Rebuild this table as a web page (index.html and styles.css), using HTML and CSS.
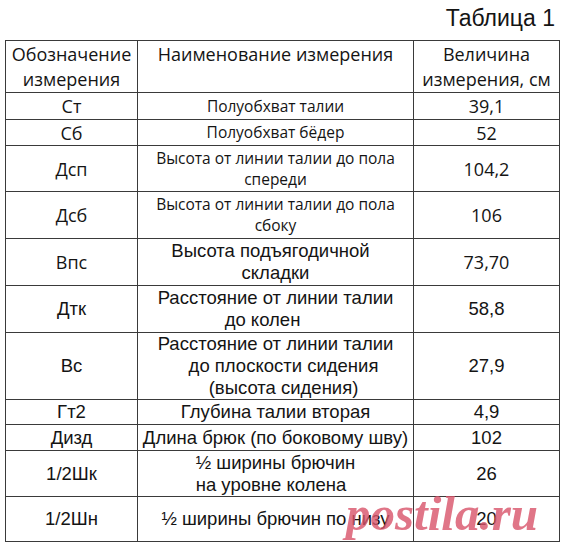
FILE: index.html
```html
<!DOCTYPE html>
<html lang="ru">
<head>
<meta charset="utf-8">
<title>Таблица 1</title>
<link rel="stylesheet" href="styles.css">
</head>
<body>
<div class="page">
  <div class="caption">Таблица 1</div>
  <table class="sizes">
    <colgroup><col class="c1"><col class="c2"><col class="c3"></colgroup>
    <thead>
      <tr class="h51 head">
        <th>Обозначение<br>измерения</th>
        <th>Наименование измерения</th>
        <th>Величина<br>измерения, см</th>
      </tr>
    </thead>
    <tbody>
      <tr class="h27 cal">
        <td>Ст</td><td class="small">Полуобхват талии</td><td>39,1</td>
      </tr>
      <tr class="h26 cal">
        <td>Сб</td><td class="small">Полуобхват бёдер</td><td>52</td>
      </tr>
      <tr class="h46 cal">
        <td>Дсп</td><td class="small">Высота от линии талии до пола<br>спереди</td><td>104,2</td>
      </tr>
      <tr class="h47 cal">
        <td>Дсб</td><td class="small">Высота от линии талии до пола<br>сбоку</td><td>106</td>
      </tr>
      <tr class="h47 cal">
        <td>Впс</td><td class="arial"><span class="ln shift-l">Высота подъягодичной</span><span class="ln">складки</span></td><td>73,70</td>
      </tr>
      <tr class="h47 arial">
        <td>Дтк</td><td><span class="ln">Расстояние от линии талии</span><span class="ln shift-l2">до колен</span></td><td>58,8</td>
      </tr>
      <tr class="h64 arial">
        <td>Вс</td><td><span class="ln">Расстояние от линии талии</span><span class="ln shift-r">до плоскости сидения</span><span class="ln shift-r">(высота сидения)</span></td><td>27,9</td>
      </tr>
      <tr class="h25 arial">
        <td>Гт2</td><td>Глубина талии вторая</td><td>4,9</td>
      </tr>
      <tr class="h26 arial">
        <td>Дизд</td><td>Длина брюк (по боковому шву)</td><td>102</td>
      </tr>
      <tr class="h46 arial">
        <td>1/2Шк</td><td><span class="block-left">½ ширины брючин<br>на уровне колена</span></td><td>26</td>
      </tr>
      <tr class="h45 arial">
        <td>1/2Шн</td><td>½ ширины брючин по низу</td><td>20</td>
      </tr>
    </tbody>
  </table>
  <div class="watermark">postila.ru</div>
</div>
</body>
</html>
```
FILE: styles.css
```css
body {
  margin: 0;
  background: #ffffff;
  color: #141414;
  font-family: "Open Sans", "Liberation Sans", sans-serif;
}

.page {
  position: relative;
  width: 563px;
  height: 546px;
  overflow: hidden;
}

.caption {
  height: 40px;
  box-sizing: border-box;
  padding: 7px 8px 0 0;
  text-align: right;
  font-family: "Liberation Sans", Arial, sans-serif;
  font-size: 23px;
  line-height: 23px;
}

.sizes {
  margin-left: 5px;
  border-collapse: collapse;
  table-layout: fixed;
  width: 554px;
}

.c1 { width: 132px; }
.c2 { width: 276px; }
.c3 { width: 146px; }

.sizes th,
.sizes td {
  border: 1px solid #3a3a3a;
  padding: 0;
  text-align: center;
  vertical-align: middle;
  font-weight: normal;
}

.head th {
  vertical-align: top;
  font-size: 18px;
  line-height: 25px;
  padding-top: 1px;
}

.cal td {
  font-family: "Open Sans", sans-serif;
  font-size: 18px;
  line-height: 22px;
}

.cal td.small {
  font-size: 15.5px;
  line-height: 21px;
}

.sizes .arial,
.arial td {
  font-family: "Liberation Sans", Arial, sans-serif;
  font-size: 18.5px;
  line-height: 22px;
}

.ln { display: block; }
.shift-l { padding-right: 10px; }
.shift-l2 { padding-right: 26px; }
.shift-r { padding-left: 16px; }

.block-left {
  display: inline-block;
  text-align: left;
}

.h25 { height: 25px; }
.h26 { height: 26px; }
.h27 { height: 27px; }
.h45 { height: 45px; }
.h46 { height: 46px; }
.h47 { height: 47px; }
.h51 { height: 51px; }
.h64 { height: 64px; }

.watermark {
  position: absolute;
  left: 346px;
  top: 489px;
  font-family: "Liberation Serif", serif;
  font-style: italic;
  font-weight: bold;
  font-size: 49px;
  line-height: 49px;
  color: #d9536a;
  opacity: 0.8;
}
```
